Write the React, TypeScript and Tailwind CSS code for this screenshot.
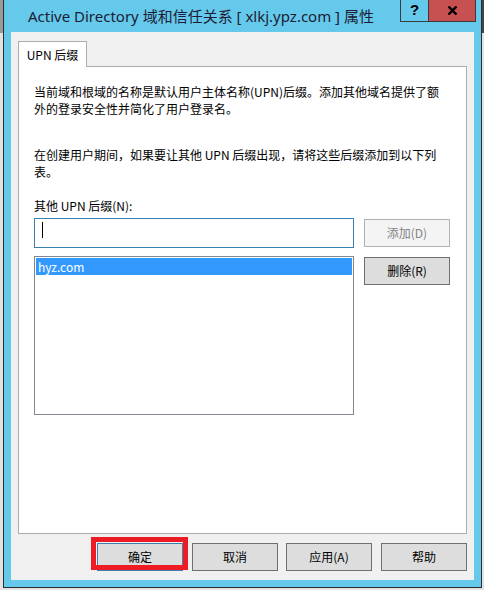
import React from "react";

const font = { fontFamily: '"Noto Sans CJK SC", "Noto Sans", sans-serif' };
const titleFont = { fontFamily: '"Noto Sans", "Noto Sans CJK SC", sans-serif' };

function Btn({
  children,
  className = "",
}: {
  children: React.ReactNode;
  className?: string;
}) {
  return (
    <div
      className={
        "w-[86px] h-[28px] flex items-center justify-center text-[12px] leading-none border " +
        className
      }
    >
      {children}
    </div>
  );
}

export default function App() {
  return (
    <div className="relative w-[484px] h-[590px] bg-[#e2e2e2] overflow-hidden" style={font}>
      {/* desktop behind the window */}
      <div className="absolute left-0 top-0 w-[3px] h-[33px] bg-[#9a9a9a]" />
      <div className="absolute right-0 top-0 w-[2px] h-[33px] bg-[#444444]" />

      <div className="pl-[3px] pr-[2px]">
        <div className="w-[479px] h-[588px] bg-[#65c9eb] border-x border-b border-[#2e2e2e] flex flex-col">
          {/* title bar */}
          <div className="h-[32px] flex items-start shrink-0">
            <div
              className="pl-[24px] pt-[5px] text-[15px] leading-[22px] text-[#1c1c34] whitespace-nowrap"
              style={titleFont}
            >
              Active Directory 域和信任关系 [ xlkj.ypz.com ] 属性
            </div>
            <div className="ml-auto mr-[5px] flex">
              <div
                className="w-[29px] h-[22px] border border-t-0 border-[#3a3a3a] flex items-center justify-center text-[15px] font-bold text-black"
                style={{ fontFamily: '"Liberation Sans", sans-serif' }}
              >
                ?
              </div>
              <div className="w-[47px] h-[22px] border border-l-0 border-t-0 border-[#3a3a3a] bg-[#c75050] flex items-center justify-center">
                <svg width="11" height="9" viewBox="0 0 11 9">
                  <path d="M1.5 0.5 L9.5 8.5 M9.5 0.5 L1.5 8.5" stroke="#000" strokeWidth="2.4" />
                </svg>
              </div>
            </div>
          </div>

          {/* client area */}
          <div className="mx-[7px] h-[548px] bg-[#f0f0f0] px-[7px] pt-[9px] flex flex-col">
            <div className="h-[25px] flex items-start">
              <div className="relative z-10 w-[69px] h-[26px] bg-white border border-b-0 border-[#adadad] flex items-center justify-center text-[12px] text-black">
                UPN 后缀
              </div>
            </div>
            <div className="h-[468px] border border-[#adadad] bg-white pl-[15px] pt-[16px] text-[12px] leading-[17px] text-black">
              <p className="whitespace-nowrap">
                当前域和根域的名称是默认用户主体名称(UPN)后缀。添加其他域名提供了额
                <br />
                外的登录安全性并简化了用户登录名。
              </p>
              <p className="mt-[29px] whitespace-nowrap">
                在创建用户期间，如果要让其他 UPN 后缀出现，请将这些后缀添加到以下列
                <br />
                表。
              </p>
              <div className="mt-[17px]">其他 UPN 后缀(N):</div>
              <div className="mt-[4px] flex gap-[10px] items-start">
                <div className="w-[320px] flex flex-col">
                  <div className="h-[30px] border border-[#3c7fb1] bg-white relative">
                    <div className="absolute left-[7px] top-[3px] w-[1px] h-[16px] bg-black" />
                  </div>
                  <div className="mt-[8px] h-[159px] border border-[#828790] bg-white p-[1px]">
                    <div className="h-[17px] bg-[#3399ff] text-white pl-[2px] leading-[17px]">
                      hyz.com
                    </div>
                  </div>
                </div>
                <div className="flex flex-col">
                  <Btn className="mt-[1px] bg-[#f4f4f4] border-[#adb2b5] text-[#838383]">
                    添加(D)
                  </Btn>
                  <Btn className="mt-[10px] bg-[#dddddd] border-[#707070] text-black">
                    删除(R)
                  </Btn>
                </div>
              </div>
            </div>
            <div className="mt-[9px] flex justify-end">
              <Btn className="bg-[#dddddd] border-[#3c7fb1] text-black">确定</Btn>
              <Btn className="ml-[9px] bg-[#dddddd] border-[#707070] text-black">取消</Btn>
              <Btn className="ml-[8px] bg-[#dddddd] border-[#707070] text-black">应用(A)</Btn>
              <Btn className="ml-[9px] bg-[#dddddd] border-[#707070] text-black">帮助</Btn>
            </div>
          </div>
        </div>
      </div>

      {/* red annotation box */}
      <div className="absolute left-[91px] top-[537px] w-[97px] h-[33px] border-[5px] border-[#ed1c24]" />
    </div>
  );
}
